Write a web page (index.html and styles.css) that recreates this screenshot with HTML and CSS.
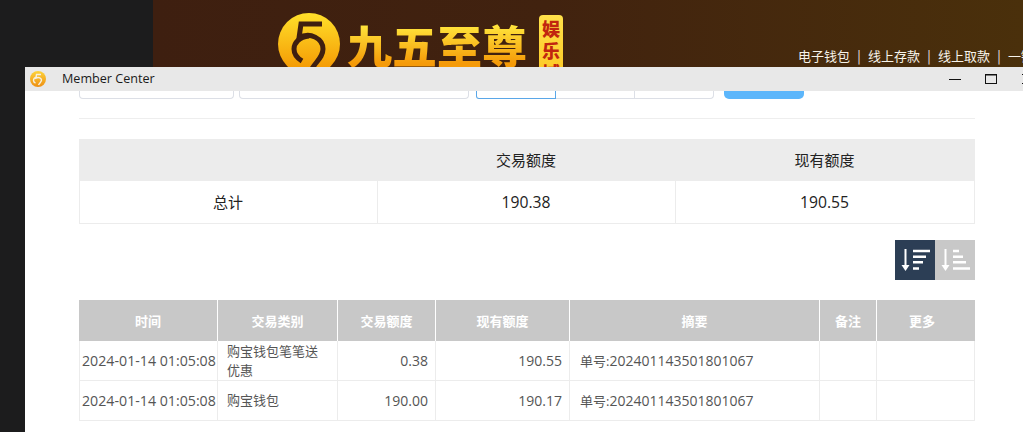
FILE: index.html
```html
<!DOCTYPE html>
<html lang="zh-CN">
<head>
<meta charset="utf-8">
<title>Member Center</title>
<link rel="stylesheet" href="styles.css">
</head>
<body>
<div class="desktop">
  <header class="banner">
    <div class="brand">
      <svg class="brand-icon" width="64" height="64" viewBox="0 0 64 64">
        <defs>
          <linearGradient id="coin" x1="0" y1="0" x2="0" y2="1">
            <stop offset="0" stop-color="#ffe02a"/>
            <stop offset="1" stop-color="#f39200"/>
          </linearGradient>
        </defs>
        <circle cx="32" cy="32" r="31" fill="url(#coin)"/>
        <path d="M45 12H24L22 26C33 19 46 27 46 37C46 46 38 50 33 60" fill="none" stroke="#3f1f10" stroke-width="5"/>
        <path d="M32 24C22 25 17 31 17 37C17 42 20 46 25 49" fill="none" stroke="#3f1f10" stroke-width="5"/>
      </svg>
      <span class="brand-name">九五至尊</span>
      <span class="brand-tag">娱乐城</span>
    </div>
    <nav class="quick-links">
      <span>电子钱包</span><i>|</i><span>线上存款</span><i>|</i><span>线上取款</span><i>|</i><span>一键回收</span>
    </nav>
  </header>

  <section class="window">
    <div class="titlebar">
      <svg class="title-icon" width="18" height="18" viewBox="0 0 18 18">
        <defs>
          <linearGradient id="mini" x1="0" y1="0" x2="0" y2="1">
            <stop offset="0" stop-color="#fdd33a"/>
            <stop offset="1" stop-color="#ee8f12"/>
          </linearGradient>
        </defs>
        <circle cx="9" cy="9" r="8" fill="url(#mini)"/>
        <path d="M12 4.5H7.5L7 8C10 6.5 12.5 8.5 12.5 10C12.5 12 10.5 13 9.5 15M8 7C5.5 7.5 4.5 9 4.5 10.5C4.5 11.5 5 12.5 6.5 13" fill="none" stroke="#f6efe0" stroke-width="1.4"/>
      </svg>
      <span class="title-text">Member Center</span>
      <div class="win-controls">
        <svg width="12" height="12" viewBox="0 0 12 12"><path d="M0 6.5H12" stroke="#111" stroke-width="1"/></svg>
        <svg width="12" height="12" viewBox="0 0 12 12"><rect x=".5" y="1.5" width="11" height="9" fill="none" stroke="#111" stroke-width="1"/><path d="M0 2H12" stroke="#111" stroke-width="1"/></svg>
        <svg width="12" height="12" viewBox="0 0 12 12"><path d="M1 1L11 11M11 1L1 11" stroke="#111" stroke-width="1"/></svg>
      </div>
    </div>

    <div class="content">
      <form class="filters">
        <div class="field field-a"></div>
        <div class="field field-b"></div>
        <div class="ranges">
          <div class="range range-active"></div>
          <div class="range"></div>
          <div class="range range-last"></div>
        </div>
        <div class="search-btn"></div>
      </form>

      <table class="summary">
        <colgroup><col class="s-side"><col class="s-mid"><col class="s-side"></colgroup>
        <thead>
          <tr><th></th><th>交易额度</th><th>现有额度</th></tr>
        </thead>
        <tbody>
          <tr><td>总计</td><td class="num">190.38</td><td class="num">190.55</td></tr>
        </tbody>
      </table>

      <div class="sorters">
        <button class="sort sort-on" type="button" aria-label="降序">
          <svg width="40" height="40" viewBox="0 0 40 40">
            <path d="M10.5 9V27" stroke="#fff" stroke-width="2"/>
            <path d="M6.5 25H14.5L10.5 31Z" fill="#fff"/>
            <path d="M18 11H35M18 16.7H31M18 22.3H28M18 28.5H24" stroke="#fff" stroke-width="2.4"/>
          </svg>
        </button>
        <button class="sort" type="button" aria-label="升序">
          <svg width="40" height="40" viewBox="0 0 40 40">
            <path d="M10.5 9V27" stroke="#fff" stroke-width="2"/>
            <path d="M6.5 25H14.5L10.5 31Z" fill="#fff"/>
            <path d="M18 11H24M18 16.7H28M18 22.3H31M18 28.5H35" stroke="#fff" stroke-width="2.4"/>
          </svg>
        </button>
      </div>

      <table class="records">
        <colgroup>
          <col class="c-time"><col class="c-type"><col class="c-amount"><col class="c-balance"><col class="c-summary"><col class="c-note"><col class="c-more">
        </colgroup>
        <thead>
          <tr><th>时间</th><th>交易类别</th><th>交易额度</th><th>现有额度</th><th>摘要</th><th>备注</th><th>更多</th></tr>
        </thead>
        <tbody>
          <tr>
            <td class="time">2024-01-14 01:05:08</td>
            <td class="type">购宝钱包笔笔送优惠</td>
            <td class="right">0.38</td>
            <td class="right">190.55</td>
            <td class="memo"><span class="memo-label">单号:</span>202401143501801067</td>
            <td></td><td></td>
          </tr>
          <tr>
            <td class="time">2024-01-14 01:05:08</td>
            <td class="type">购宝钱包</td>
            <td class="right">190.00</td>
            <td class="right">190.17</td>
            <td class="memo"><span class="memo-label">单号:</span>202401143501801067</td>
            <td></td><td></td>
          </tr>
        </tbody>
      </table>
    </div>
  </section>
</div>
</body>
</html>
```

FILE: styles.css
```css
* { box-sizing: border-box; }

html, body {
  margin: 0;
  height: 100%;
  overflow: hidden;
}

body {
  background: #1c1c1d;
  font-family: "Open Sans", "Noto Sans CJK SC", sans-serif;
}

.desktop {
  position: relative;
  width: 1023px;
  height: 432px;
  overflow: hidden;
  padding-left: 153px;
}

.banner {
  height: 67px;
  overflow: hidden;
  display: flex;
  background: linear-gradient(90deg, #3e1f10 0%, #41220f 45%, #4a300b 100%);
}

.brand {
  margin-left: 124px;
  padding-top: 12px;
  display: flex;
  align-items: flex-start;
}

.brand-icon {
  flex: none;
}

.brand-name {
  margin: 7px 0 0 6px;
  font: 900 45px/52px "Noto Sans CJK SC", sans-serif;
  white-space: nowrap;
  background: linear-gradient(180deg, #ffe23a 15%, #f59a08 85%);
  -webkit-background-clip: text;
  background-clip: text;
  color: transparent;
}

.brand-tag {
  flex: none;
  width: 24px;
  margin: 3px 0 0 12px;
  padding: 2px 0 6px;
  border-radius: 4px;
  background: linear-gradient(180deg, #ffe14a, #fcc21c);
  color: #c1260f;
  font: 900 18px/22px "Noto Sans CJK SC", sans-serif;
  text-align: center;
}

.quick-links {
  margin-left: 235px;
  padding-top: 47px;
  display: flex;
  flex: none;
  font: 400 13px/18px "Noto Sans CJK SC", sans-serif;
  color: #f7f3ea;
  white-space: nowrap;
}

.quick-links i {
  font-style: normal;
  width: 18px;
  text-align: center;
}

.window {
  position: absolute;
  left: 25px;
  top: 67px;
  right: 0;
  bottom: 0;
  background: #fff;
  overflow: hidden;
}

.titlebar {
  height: 24px;
  background: #e8e8e8;
  display: flex;
  align-items: center;
  padding-left: 4px;
}

.title-text {
  margin: 0 0 2px 15px;
  font-size: 12.6px;
  color: #1a1a1a;
}

.win-controls {
  margin-left: auto;
  margin-right: -10px;
  display: flex;
  gap: 24px;
  flex: none;
}

.content {
  padding: 0 48px 0 54px;
}

.filters {
  height: 28px;
  display: flex;
  align-items: flex-start;
  border-bottom: 1px solid #eee;
}

.field {
  height: 8px;
  background: #fff;
  border: 1px solid #dcdfe6;
  border-top: 0;
  border-radius: 0 0 4px 4px;
}

.field-a { width: 155px; margin-right: 5px; }
.field-b { width: 230px; margin-right: 7px; }

.ranges {
  display: flex;
  width: 238px;
  margin-right: 10px;
}

.range {
  width: 79px;
  height: 8px;
  border: 1px solid #dcdfe6;
  border-top: 0;
  border-left: 0;
}

.range-active {
  width: 80px;
  border: 1px solid #5aa7e8;
  border-top: 0;
  border-radius: 0 0 0 3px;
}

.range-last {
  border-radius: 0 0 4px 0;
}

.search-btn {
  width: 80px;
  height: 8px;
  background: #5cb6fb;
  border-radius: 0 0 5px 5px;
}

table {
  border-collapse: separate;
  border-spacing: 0;
  table-layout: fixed;
  width: 896px;
}

.summary {
  margin-top: 20px;
  color: #222;
  font-size: 15px;
}

.s-side { width: 299px; }
.s-mid { width: 298px; }

.summary th {
  height: 42px;
  background: #ececec;
  font-weight: 400;
  padding: 0 2px 2px 0;
}

.summary td {
  height: 43px;
  padding: 0 1px 1px 0;
  text-align: center;
  border-right: 1px solid #ececec;
  border-bottom: 1px solid #ececec;
}

.summary td:first-child,
.records td:first-child {
  border-left: 1px solid #ececec;
}

.summary .num {
  font-size: 15.7px;
}

.sorters {
  display: flex;
  justify-content: flex-end;
  margin-top: 16px;
}

.sort {
  width: 40px;
  height: 40px;
  padding: 0;
  border: 0;
  background: #c8c8c8;
  display: block;
}

.sort svg {
  display: block;
}

.sort-on {
  background: #2c3e55;
}

.records {
  margin-top: 20px;
  font-size: 14px;
  color: #555;
}

.c-time { width: 139px; }
.c-type { width: 120px; }
.c-amount { width: 98px; }
.c-balance { width: 134px; }
.c-summary { width: 250px; }
.c-note { width: 57px; }
.c-more { width: 98px; }

.records th {
  height: 41px;
  padding: 0 0 1px;
  background: #c8c8c8;
  color: #fff;
  font-size: 13px;
  font-weight: 700;
  border-right: 1px solid #fff;
}

.records th:last-child {
  border-right: 0;
  padding-right: 8px;
}

.records td {
  height: 40px;
  padding: 0;
  border-right: 1px solid #ececec;
  border-bottom: 1px solid #ececec;
  line-height: 19px;
}

.records .time {
  padding-left: 2px;
  font-size: 14.2px;
  white-space: nowrap;
}

.records .type {
  padding: 0 12px 0 9px;
  font-size: 13px;
}

.records .right {
  text-align: right;
  padding-right: 7px;
}

.records .memo {
  padding-left: 10px;
  white-space: nowrap;
}

.memo-label {
  font-size: 13px;
}
```
